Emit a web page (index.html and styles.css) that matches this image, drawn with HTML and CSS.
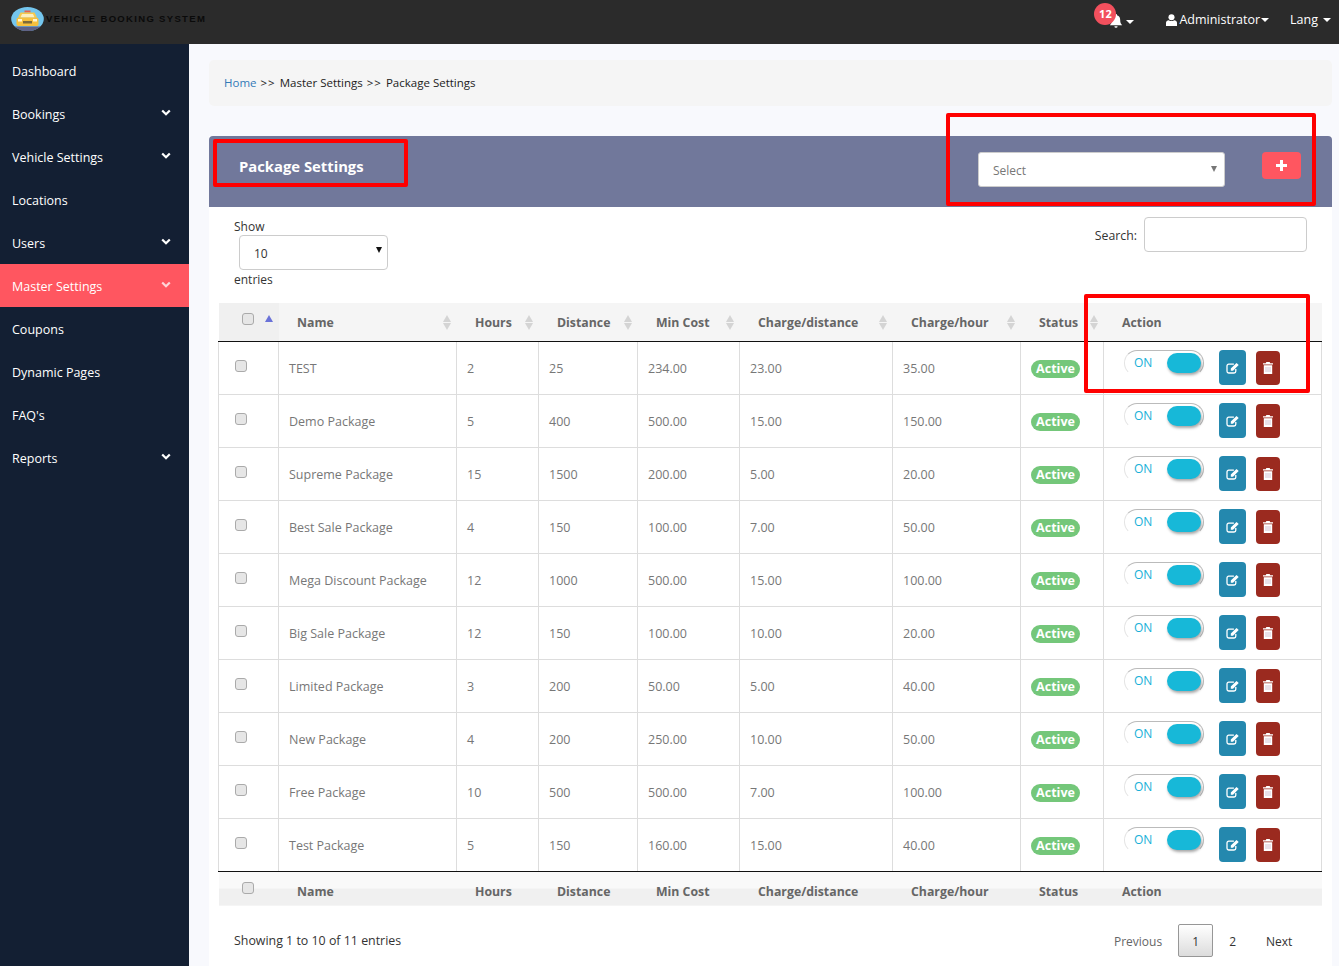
FILE: index.html
```html
<!DOCTYPE html>
<html lang="en">
<head>
<meta charset="utf-8">
<title>Package Settings</title>
<link rel="stylesheet" href="styles.css">
</head>
<body>
<svg class="defs" width="0" height="0" aria-hidden="true">
  <symbol id="chev" viewBox="0 0 10 8"><path d="M1.2 1.5 5 5.3 8.800 1.500" fill="none" stroke="currentColor" stroke-width="2.200"/></symbol>
  <symbol id="edit" viewBox="0 0 14 12"><path d="M9.800 7v2.300A1.700 1.700 0 0 1 8.100 11H2.700A1.700 1.700 0 0 1 1 9.300V3.900a1.700 1.700 0 0 1 1.700-1.700h5.200" fill="none" stroke="#fff" stroke-width="1.300"/><path d="M4.800 6.600 10.500 .9l2.200 2.200L7 8.800H4.800z" fill="#fff"/></symbol>
  <symbol id="trash" viewBox="0 0 10 12"><path d="M3.400 0h3.200l.7 1.300H10v1.200H0V1.300h2.700zM.8 3.300h8.400V12H.8z" fill="#fff"/><path d="M3 5v5M5 5v5M7 5v5" stroke="#c9b6c9" stroke-width=".8"/></symbol>
</svg>
<header class="topbar">
  <div class="brand">
    <svg class="logo" viewBox="0 0 33 24" width="33" height="24" aria-hidden="true">
      <ellipse cx="16.500" cy="12" rx="16.300" ry="12" fill="#74c6ee"/>
      <path d="M3.500 19.500h26A16.300 12 0 0 1 3.500 19.500z" fill="#5f6285"/>
      <rect x="13.500" y="3.500" width="6" height="2" fill="#e8604c"/>
      <path d="M9.500 5.500h14l2.500 5H7z" fill="#f8c94a"/>
      <path d="M11 7h11l1.500 3.500h-14z" fill="#fbeec0"/>
      <rect x="5.500" y="10.500" width="22" height="8.500" rx="2" fill="#f6c03d"/>
      <rect x="7" y="12" width="4" height="2.500" fill="#fff6d5"/>
      <rect x="22" y="12" width="4" height="2.500" fill="#fff6d5"/>
      <rect x="12" y="14" width="9" height="2.500" fill="#7d6a3a"/>
    </svg>
    <span class="brand-name">VEHICLE BOOKING SYSTEM</span>
  </div>
  <nav class="topnav">
    <span class="bell">
      <svg viewBox="0 0 14 14" width="14" height="14" aria-hidden="true"><path d="M7 0a1 1 0 0 1 1 1.200C10.400 1.700 11.200 3.700 11.200 6c0 3 .8 4 2 5.300H.8C2 10 2.800 9 2.800 6c0-2.300.8-4.300 3.200-4.800A1 1 0 0 1 7 0zM5.400 12.200h3.200A1.600 1.600 0 0 1 5.400 12.200z" fill="#fff"/></svg>
      <span class="badge">12</span>
      <i class="caret bell-caret"></i>
    </span>
    <span class="navlink user">
      <svg viewBox="0 0 12 13" width="11" height="12" aria-hidden="true"><circle cx="6" cy="3.500" r="3.300" fill="#fff"/><path d="M0 13V9.500C0 7.800 1.500 6.700 3 6.700c1.800 1.300 4.200 1.300 6 0 1.500 0 3 1.100 3 2.800V13z" fill="#fff"/></svg>
      Administrator<i class="caret"></i>
    </span>
    <span class="navlink lang">Lang<i class="caret"></i></span>
  </nav>
</header>
<div class="shell">
  <aside class="sidebar">
    <a class="side-item">Dashboard</a>
    <a class="side-item">Bookings<svg class="chev"><use href="#chev"/></svg></a>
    <a class="side-item">Vehicle Settings<svg class="chev"><use href="#chev"/></svg></a>
    <a class="side-item">Locations</a>
    <a class="side-item">Users<svg class="chev"><use href="#chev"/></svg></a>
    <a class="side-item active">Master Settings<svg class="chev"><use href="#chev"/></svg></a>
    <a class="side-item">Coupons</a>
    <a class="side-item">Dynamic Pages</a>
    <a class="side-item">FAQ's</a>
    <a class="side-item">Reports<svg class="chev"><use href="#chev"/></svg></a>
  </aside>
  <main class="content">
    <div class="crumbs"><a class="home">Home</a><span class="sep">&gt;&gt;</span>Master Settings<span class="sep">&gt;&gt;</span>Package Settings</div>
    <section class="panel">
      <div class="panel-head">
        <h1 class="panel-title">Package Settings</h1>
        <div class="panel-tools">
          <div class="fake-select">Select<i class="sel-arrow"></i></div>
          <button class="add-btn" type="button"><svg viewBox="0 0 11 11" width="11" height="11" aria-hidden="true"><path d="M4 0h3v4h4v3H7v4H4V7H0V4h4z" fill="#fff"/></svg></button>
        </div>
      </div>
      <div class="controls">
        <div class="length">
          <div>Show</div>
          <div class="len-select">10<i class="len-arrow"></i></div>
          <div>entries</div>
        </div>
        <label class="search"><span class="search-label">Search:</span><input class="search-input" type="text"></label>
      </div>
      <table class="grid">
        <colgroup><col class="c0"><col class="c1"><col class="c2"><col class="c3"><col class="c4"><col class="c5"><col class="c6"><col class="c7"><col class="c8"></colgroup>
        <thead>
          <tr>
            <th class="chk-h"><input type="checkbox" class="cb"><i class="asc"></i></th>
            <th>Name<i class="sort"></i></th>
            <th>Hours<i class="sort"></i></th>
            <th>Distance<i class="sort"></i></th>
            <th>Min Cost<i class="sort"></i></th>
            <th>Charge/distance<i class="sort"></i></th>
            <th>Charge/hour<i class="sort"></i></th>
            <th>Status<i class="sort"></i></th>
            <th>Action</th>
          </tr>
        </thead>
        <tbody>
          <tr><td class="chk"><input type="checkbox" class="cb"></td><td>TEST</td><td>2</td><td>25</td><td>234.00</td><td>23.00</td><td>35.00</td><td><span class="pill">Active</span></td><td class="act"><div class="act-row"><span class="toggle">ON<i class="knob"></i></span><a class="btn edit"><svg width="14" height="12"><use href="#edit"/></svg></a><a class="btn del"><svg width="10" height="12"><use href="#trash"/></svg></a></div></td></tr>
          <tr><td class="chk"><input type="checkbox" class="cb"></td><td>Demo Package</td><td>5</td><td>400</td><td>500.00</td><td>15.00</td><td>150.00</td><td><span class="pill">Active</span></td><td class="act"><div class="act-row"><span class="toggle">ON<i class="knob"></i></span><a class="btn edit"><svg width="14" height="12"><use href="#edit"/></svg></a><a class="btn del"><svg width="10" height="12"><use href="#trash"/></svg></a></div></td></tr>
          <tr><td class="chk"><input type="checkbox" class="cb"></td><td>Supreme Package</td><td>15</td><td>1500</td><td>200.00</td><td>5.00</td><td>20.00</td><td><span class="pill">Active</span></td><td class="act"><div class="act-row"><span class="toggle">ON<i class="knob"></i></span><a class="btn edit"><svg width="14" height="12"><use href="#edit"/></svg></a><a class="btn del"><svg width="10" height="12"><use href="#trash"/></svg></a></div></td></tr>
          <tr><td class="chk"><input type="checkbox" class="cb"></td><td>Best Sale Package</td><td>4</td><td>150</td><td>100.00</td><td>7.00</td><td>50.00</td><td><span class="pill">Active</span></td><td class="act"><div class="act-row"><span class="toggle">ON<i class="knob"></i></span><a class="btn edit"><svg width="14" height="12"><use href="#edit"/></svg></a><a class="btn del"><svg width="10" height="12"><use href="#trash"/></svg></a></div></td></tr>
          <tr><td class="chk"><input type="checkbox" class="cb"></td><td>Mega Discount Package</td><td>12</td><td>1000</td><td>500.00</td><td>15.00</td><td>100.00</td><td><span class="pill">Active</span></td><td class="act"><div class="act-row"><span class="toggle">ON<i class="knob"></i></span><a class="btn edit"><svg width="14" height="12"><use href="#edit"/></svg></a><a class="btn del"><svg width="10" height="12"><use href="#trash"/></svg></a></div></td></tr>
          <tr><td class="chk"><input type="checkbox" class="cb"></td><td>Big Sale Package</td><td>12</td><td>150</td><td>100.00</td><td>10.00</td><td>20.00</td><td><span class="pill">Active</span></td><td class="act"><div class="act-row"><span class="toggle">ON<i class="knob"></i></span><a class="btn edit"><svg width="14" height="12"><use href="#edit"/></svg></a><a class="btn del"><svg width="10" height="12"><use href="#trash"/></svg></a></div></td></tr>
          <tr><td class="chk"><input type="checkbox" class="cb"></td><td>Limited Package</td><td>3</td><td>200</td><td>50.00</td><td>5.00</td><td>40.00</td><td><span class="pill">Active</span></td><td class="act"><div class="act-row"><span class="toggle">ON<i class="knob"></i></span><a class="btn edit"><svg width="14" height="12"><use href="#edit"/></svg></a><a class="btn del"><svg width="10" height="12"><use href="#trash"/></svg></a></div></td></tr>
          <tr><td class="chk"><input type="checkbox" class="cb"></td><td>New Package</td><td>4</td><td>200</td><td>250.00</td><td>10.00</td><td>50.00</td><td><span class="pill">Active</span></td><td class="act"><div class="act-row"><span class="toggle">ON<i class="knob"></i></span><a class="btn edit"><svg width="14" height="12"><use href="#edit"/></svg></a><a class="btn del"><svg width="10" height="12"><use href="#trash"/></svg></a></div></td></tr>
          <tr><td class="chk"><input type="checkbox" class="cb"></td><td>Free Package</td><td>10</td><td>500</td><td>500.00</td><td>7.00</td><td>100.00</td><td><span class="pill">Active</span></td><td class="act"><div class="act-row"><span class="toggle">ON<i class="knob"></i></span><a class="btn edit"><svg width="14" height="12"><use href="#edit"/></svg></a><a class="btn del"><svg width="10" height="12"><use href="#trash"/></svg></a></div></td></tr>
          <tr><td class="chk"><input type="checkbox" class="cb"></td><td>Test Package</td><td>5</td><td>150</td><td>160.00</td><td>15.00</td><td>40.00</td><td><span class="pill">Active</span></td><td class="act"><div class="act-row"><span class="toggle">ON<i class="knob"></i></span><a class="btn edit"><svg width="14" height="12"><use href="#edit"/></svg></a><a class="btn del"><svg width="10" height="12"><use href="#trash"/></svg></a></div></td></tr>
        </tbody>
        <tfoot>
          <tr>
            <th class="chk-f"><input type="checkbox" class="cb"></th>
            <th>Name</th><th>Hours</th><th>Distance</th><th>Min Cost</th><th>Charge/distance</th><th>Charge/hour</th><th>Status</th><th>Action</th>
          </tr>
        </tfoot>
      </table>
      <div class="table-foot">
        <div class="info">Showing 1 to 10 of 11 entries</div>
        <div class="pager"><a class="pg muted">Previous</a><a class="pg current">1</a><a class="pg">2</a><a class="pg">Next</a></div>
      </div>
    </section>
  </main>
</div>
<div class="mark mark-title"></div>
<div class="mark mark-tools"></div>
<div class="mark mark-action"></div>
</body>
</html>
```
FILE: styles.css
```css
* { box-sizing: border-box; }
html, body { margin: 0; height: 966px; overflow: hidden; }
body { font: 12.500px/18px "Open Sans", "Liberation Sans", sans-serif; color: #333; background: #f8f9fd; position: relative; }
.defs { position: absolute; }
.topbar { height: 44px; background: #2b2b2b; display: flex; justify-content: space-between; align-items: flex-start; }
.brand { display: flex; align-items: center; height: 38px; padding-left: 11px; }
.logo { display: block; }
.brand-name { font: bold 9.500px/12px "Liberation Sans", sans-serif; color: #0a0a0a; letter-spacing: 1.330px; margin-left: 2px; white-space: nowrap; }
.topnav { display: flex; align-items: center; height: 38px; color: #fff; }
.bell { position: relative; display: flex; width: 42px; margin-right: 30px; padding-left: 15px; padding-top: 3px; }
.badge { position: absolute; left: 0; top: -8px; width: 22px; height: 22px; border-radius: 50%; background: #f2505d; color: #fff; font-size: 11px; font-weight: 700; line-height: 22px; text-align: center; }
.caret { display: inline-block; border-left: 4px solid transparent; border-right: 4px solid transparent; border-top: 4px solid #fff; margin-left: 2px; vertical-align: 2px; }
.bell-caret { margin: 6px 0 0 3px; }
.navlink { white-space: nowrap; padding-top: 1px; }
.user { display: flex; align-items: center; gap: 2px; }
.user .caret { margin-left: -1px; }
.lang { margin: 0 8px 0 21px; }
.lang .caret { margin-left: 5px; }
.shell { display: flex; height: 922px; }
.sidebar { width: 189px; flex: none; background: #131f33; padding-top: 5px; }
.side-item { display: flex; align-items: center; justify-content: space-between; height: 43px; padding: 2px 18px 0 12px; color: #fff; }
.side-item.active { background: #ff5660; }
.chev { width: 10px; height: 8px; margin-top: -3px; color: #fff; }
.active .chev { color: #ffd5d8; }
.content { flex: 1; min-width: 0; padding: 16px 7px 0 20px; }
.crumbs { height: 46px; background: #f5f5f5; border-radius: 5px; padding: 0 15px; display: flex; align-items: center; font-size: 11.500px; color: #222; }
.home { color: #337ab7; }
.sep { margin: 0 4px; letter-spacing: 1px; }
.panel { margin-top: 30px; background: #fff; height: 830px; }
.panel-head { height: 71px; background: #71789b; border-radius: 4px 4px 0 0; display: flex; justify-content: space-between; padding: 16px 31px 0 30px; }
.panel-title { margin: 4px 0 0; color: #fff; font-size: 14.800px; line-height: 20px; font-weight: 700; }
.panel-tools { display: flex; align-items: flex-start; gap: 37px; }
.fake-select { position: relative; width: 247px; height: 35px; background: #fff; border: 1px solid #ccc; border-radius: 3px; padding: 9px 14px 0; font-size: 12px; line-height: 18px; color: #777; }
.sel-arrow { position: absolute; right: 7px; top: 13px; border-left: 3.500px solid transparent; border-right: 3.500px solid transparent; border-top: 6px solid #777; }
.add-btn { width: 39px; height: 27px; background: #ff5660; border: 0; border-radius: 4px; padding: 0; display: flex; align-items: center; justify-content: center; }
.controls { display: flex; justify-content: space-between; padding: 11px 25px 0 25px; height: 96px; }
.length { font-size: 12px; line-height: 18px; color: #333; }
.len-select { position: relative; width: 149px; height: 35px; margin: -1px 0 1px 5px; border: 1px solid #ccc; border-radius: 4px; padding: 9px 14px 0; }
.len-arrow { position: absolute; right: 5px; top: 11px; border-left: 3.500px solid transparent; border-right: 3.500px solid transparent; border-top: 6px solid #111; }
.search { display: flex; align-items: center; gap: 7px; height: 35px; margin-top: -1px; font-size: 12.300px; }
.search-label { margin-top: 2px; }
.search-input { width: 163px; height: 35px; border: 1px solid #ccc; border-radius: 4px; background: #fff; }
.grid { margin-left: 9px; width: 1103px; border-collapse: collapse; table-layout: fixed; }
.c0 { width: 60px; } .c1 { width: 178px; } .c2 { width: 82px; } .c3 { width: 99px; } .c4 { width: 102px; }
.c5 { width: 153px; } .c6 { width: 128px; } .c7 { width: 83px; } .c8 { width: 218px; }
.grid thead th { position: relative; height: 38px; background: #f5f5f5; border-bottom: 1px solid #111; text-align: left; padding: 3px 0 0 18.500px; color: #666; font-size: 12.300px; font-weight: 700; white-space: nowrap; }
.grid thead .chk-h { background: #f0f0f0; box-shadow: 1px 0 1px #e8e8e8; }
.sort { position: absolute; right: 6px; top: 12px; width: 8px; height: 15px; }
.sort::before, .sort::after { content: ""; position: absolute; left: 0; border-left: 4px solid transparent; border-right: 4px solid transparent; }
.sort::before { top: 0; border-bottom: 7px solid #d4d4d4; }
.sort::after { bottom: 0; border-top: 7px solid #d4d4d4; }
.asc { position: absolute; left: 46px; top: 12px; border-left: 4px solid transparent; border-right: 4px solid transparent; border-bottom: 7px solid #6a72d8; }
.cb { appearance: none; display: block; width: 12px; height: 12px; margin: 0; border: 1px solid #aaa; border-radius: 3px; background: #e6e6e6; }
.grid thead .cb { position: absolute; left: 23px; top: 10px; }
.grid tbody td { height: 53px; padding: 2px 0 0 10px; border: 1px solid #ddd; border-top: 0; color: #777; white-space: nowrap; }
.grid tbody tr:last-child td { border-bottom: 1px solid #111; }
.grid tbody .chk { padding: 0 0 4px 16px; }
.pill { display: inline-block; width: 49px; height: 18px; margin-top: -1px; border-radius: 9px; background: #74c77a; color: #fff; font-weight: 700; line-height: 18px; text-align: center; vertical-align: middle; }
.grid tbody .act { padding: 0 0 0 20px; }
.act-row { display: flex; align-items: flex-start; height: 52px; padding-top: 8px; }
.toggle { position: relative; display: block; width: 80px; height: 26px; padding: 3px 0 0 9px; border: 1px solid #bbb; border-bottom-color: #fff; border-left-color: #e4e4e4; border-radius: 13px; color: #17b0d8; line-height: 18px; font-size: 12px; font-weight: 400; }
.knob { position: absolute; right: 2px; top: 2px; width: 34px; height: 20px; border-radius: 10px; background: #17b8d8; box-shadow: 1px 2px 3px rgba(0,0,0,.35); }
.btn { display: flex; align-items: center; justify-content: center; border-radius: 4px; height: 35px; padding-top: 1px; }
.edit { width: 27px; margin-left: 15px; background: #2488ae; }
.del { width: 24px; margin-left: 10px; background: #9b2a1f; margin-top: 1px; height: 34px; padding-top: 0; }
.grid tfoot th { height: 35px; padding: 6px 0 0 18.500px; text-align: left; color: #666; font-size: 12.300px; font-weight: 700; white-space: nowrap; background: linear-gradient(#f9f9f9 0 17px, #f0f0f0 17px); position: relative; }
.grid tfoot .cb { position: absolute; left: 23px; top: 10px; }
.table-foot { display: flex; justify-content: space-between; padding: 18px 36px 0 25px; }
.info { padding-top: 8px; font-size: 12.400px; color: #333; }
.pager { display: flex; align-items: center; font-size: 12px; gap: 0; }
.pg { padding: 0 16px; height: 33px; line-height: 35px; color: #333; }
.pg.muted { color: #666; padding-right: 16px; }
.pg.current { width: 35px; padding: 0; text-align: center; border: 1px solid #979797; border-radius: 2px; line-height: 33px; background: linear-gradient(#fff, #dcdcdc); }
.pg:last-child { padding: 0 0 0 14px; width: 44px; }
.mark { position: absolute; border: 4px solid #f00; border-radius: 2px; pointer-events: none; }
.mark-title { left: 213px; top: 139px; width: 195px; height: 48px; }
.mark-tools { left: 946px; top: 113px; width: 370px; height: 93px; }
.mark-action { left: 1084px; top: 294px; width: 226px; height: 99px; }
```
